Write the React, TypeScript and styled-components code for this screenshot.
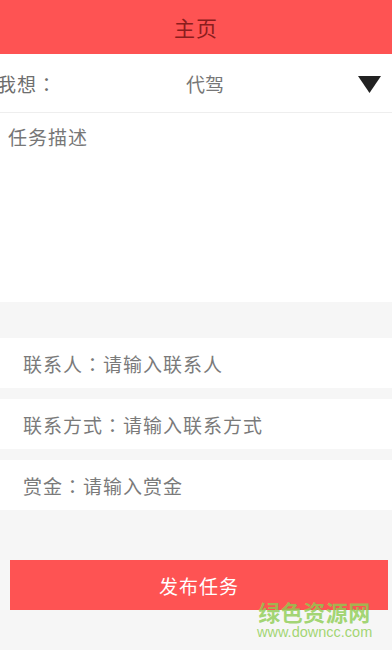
import React from "react";
import styled, { createGlobalStyle } from "styled-components";

const Global = createGlobalStyle`
  html, body { margin: 0; padding: 0; background: #f6f6f6; }
  body { font-family: "Noto Sans CJK SC", "Noto Sans", sans-serif; }
  #root { min-height: 650px; }
`;

const Page = styled.div`
  position: relative;
  width: 392px;
  height: 650px;
  background: #f6f6f6;
  display: flex;
  flex-direction: column;
  overflow: hidden;
`;

const Header = styled.header`
  height: 54px;
  background: #fe5353;
  display: flex;
  align-items: center;
  justify-content: center;
  color: #8a1d1d;
  font-size: 21px;
  letter-spacing: 1px;
`;

const SelectRow = styled.div`
  height: 58px;
  background: #fff;
  border-bottom: 1px solid #eeeeee;
  display: grid;
  grid-template-columns: 1fr auto 1fr;
  align-items: center;
  color: #6e6e6e;
  font-size: 19px;
`;

const Label = styled.span`
  margin-left: -3px;
  letter-spacing: 1px;
`;

const Colon = styled.span`
  font-family: "Noto Sans CJK TC", "Noto Sans CJK SC", sans-serif;
`;

const Value = styled.span`
  color: #777;
  padding-left: 18px;
`;

const Caret = styled.svg`
  justify-self: end;
  margin-right: 11px;
  margin-top: 2px;
`;

const Desc = styled.div`
  height: 189px;
  background: #fff;
  padding: 10px 8px;
  box-sizing: border-box;
  color: #777;
  font-size: 19px;
  letter-spacing: 1px;
`;

const Form = styled.div`
  margin-top: 36px;
  display: flex;
  flex-direction: column;
  gap: 11px;
`;

const Field = styled.div`
  height: 50px;
  background: #fff;
  display: flex;
  align-items: center;
  padding-left: 23px;
  color: #7a7a7a;
  font-size: 19px;
  letter-spacing: 1px;
`;

const Submit = styled.button`
  margin: 50px 4px 0 10px;
  height: 50px;
  border: none;
  background: #fe5353;
  color: #fff;
  font-family: inherit;
  font-size: 19px;
  letter-spacing: 1px;
  padding: 0;
`;

const Watermark = styled.div`
  position: absolute;
  left: 257px;
  top: 599px;
  display: flex;
  flex-direction: column;
  align-items: center;
  gap: 2px;
  color: rgba(140, 205, 80, 0.8);
  pointer-events: none;
`;

const WmTitle = styled.span`
  font-size: 22px;
  font-weight: 700;
  letter-spacing: 0.5px;
  line-height: 24px;
`;

const WmUrl = styled.span`
  font-family: "Liberation Sans", Arial, sans-serif;
  font-size: 14.5px;
  line-height: 15px;
`;

export default function App() {
  return (
    <Page>
      <Global />
      <Header>主页</Header>
      <SelectRow>
        <Label>
          我想<Colon>：</Colon>
        </Label>
        <Value>代驾</Value>
        <Caret width="23" height="17" viewBox="0 0 23 17">
          <polygon points="0,0 23,0 11.5,17" fill="#222" />
        </Caret>
      </SelectRow>
      <Desc>任务描述</Desc>
      <Form>
        <Field>
          联系人<Colon>：</Colon>请输入联系人
        </Field>
        <Field>
          联系方式<Colon>：</Colon>请输入联系方式
        </Field>
        <Field>
          赏金<Colon>：</Colon>请输入赏金
        </Field>
      </Form>
      <Submit>发布任务</Submit>
      <Watermark>
        <WmTitle>绿色资源网</WmTitle>
        <WmUrl>www.downcc.com</WmUrl>
      </Watermark>
    </Page>
  );
}
